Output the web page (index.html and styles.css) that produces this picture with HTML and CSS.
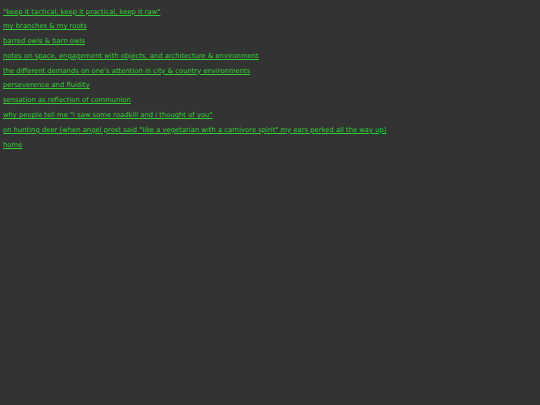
FILE: index.html
```html
<!DOCTYPE html>
<html>
<head>
<meta charset="utf-8">
<link rel="stylesheet" href="styles.css">
</head>
<body>
<nav class="links">
<a href="#">"keep it tactical, keep it practical, keep it raw"</a>
<a href="#">my branches &amp; my roots</a>
<a href="#">barred owls &amp; barn owls</a>
<a href="#">notes on space, engagement with objects, and architecture &amp; environment</a>
<a href="#">the different demands on one's attention in city &amp; country environments</a>
<a href="#">perseverence and fluidity</a>
<a href="#">sensation as reflection of communion</a>
<a href="#">why people tell me "i saw some roadkill and i thought of you"</a>
<a href="#">on hunting deer (when angel prost said "like a vegetarian with a carnivore spirit" my ears perked all the way up)</a>
<a href="#">home</a>
</nav>
</body>
</html>
```
FILE: styles.css
```css
html, body {
  margin: 0;
  padding: 0;
  background: #333333;
  height: 100%;
}
.links {
  display: flex;
  flex-direction: column;
  align-items: flex-start;
  gap: 6.8px;
  padding: 7.5px 3px;
  font-family: "DejaVu Sans", Verdana, sans-serif;
  font-size: 6.8px;
  line-height: 8px;
}
.links a {
  color: #33cc33;
  text-decoration: underline;
}
```
